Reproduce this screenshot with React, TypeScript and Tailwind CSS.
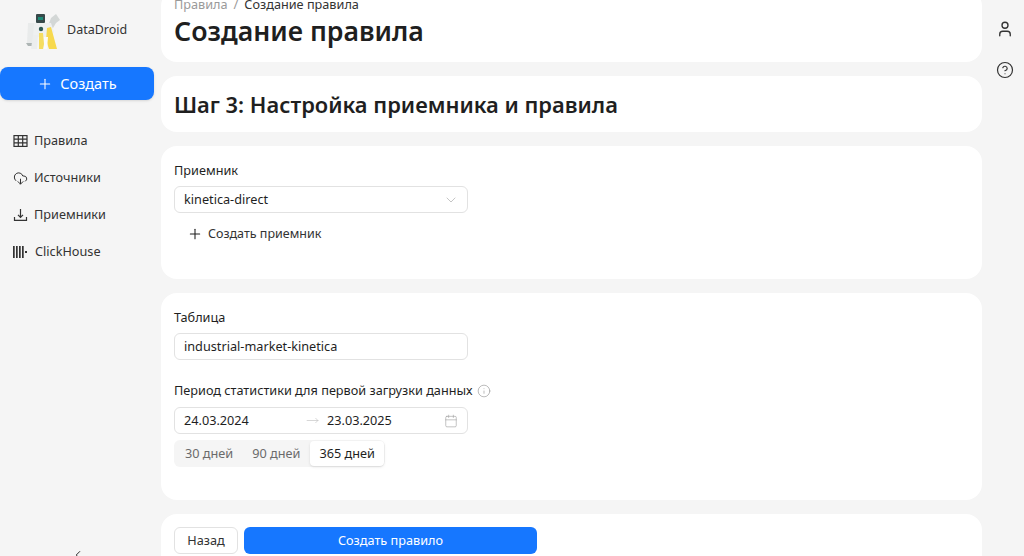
import { Plus, ChevronDown, ChevronLeft, CloudDownload, User, CircleHelp, Info, Calendar, MoveRight } from 'lucide-react';

function TableIcon() {
  return (
    <svg width="15" height="14" viewBox="0 0 15 14" fill="none" stroke="currentColor" strokeWidth="1.2">
      <rect x="1" y="1.6" width="13" height="10.8" />
      <path d="M1 5.2h13M1 8.8h13M5.3 1.6v10.8M9.7 1.6v10.8" />
    </svg>
  );
}

function TrayDownloadIcon() {
  return (
    <svg width="15" height="14" viewBox="0 0 15 14" fill="none" stroke="currentColor" strokeWidth="1.2">
      <path d="M7.5 1v8M5 6.8l2.5 2.6L10 6.8" />
      <path d="M1.5 9v3.4h12V9" />
    </svg>
  );
}

function Logo() {
  return (
    <svg width="34" height="36" viewBox="0 0 34 36">
      <path d="M25 5l5-4 4 6-4 3-3 5-5-2z" fill="#d3d7d6" />
      <rect x="10" y="1" width="9" height="9" rx="1" fill="#37494a" />
      <rect x="12" y="4" width="5" height="3" fill="#1e8c78" />
      <path d="M8 10h17l3 9-3 5H7z" fill="#eef0f0" />
      <circle cx="15" cy="16" r="2.2" fill="#2f5a55" />
      <path d="M2 10h6l-1 20H1z" fill="#e9ebeb" />
      <path d="M0 30h6v3H2z" fill="#aeb5b4" />
      <path d="M7 22h5l-1 14H5z" fill="#eceeee" />
      <path d="M13 20h4l1 11-1 5h-4z" fill="#f5dd62" />
      <path d="M21 15l4-1 6 22h-8l-3-9z" fill="#f7d94e" />
      <path d="M18 24h4l-1 12h-3z" fill="#fbfbfb" />
    </svg>
  );
}

function ClickHouseIcon() {
  return (
    <svg width="15" height="14" viewBox="0 0 15 14" fill="currentColor">
      <rect x="0" y="1" width="1.7" height="12" />
      <rect x="3" y="1" width="1.7" height="12" />
      <rect x="6" y="1" width="1.7" height="12" />
      <rect x="9" y="1" width="1.7" height="12" />
      <rect x="12" y="6" width="2" height="2" />
    </svg>
  );
}

const NAV = [
  { label: 'Правила', icon: <TableIcon /> },
  { label: 'Источники', icon: <CloudDownload size={15} strokeWidth={1.6} /> },
  { label: 'Приемники', icon: <TrayDownloadIcon /> },
];

function Card({ className, children }: { className: string; children: React.ReactNode }) {
  return <section className={`rounded-2xl bg-white px-[13px] ${className}`}>{children}</section>;
}

export default function App() {
  return (
    <div
      className="flex h-[556px] w-[1024px] overflow-hidden bg-[#f5f5f5] text-[12.7px] text-[#1f1f1f]"
      style={{ fontFamily: '"Noto Sans", sans-serif' }}
    >
      <aside className="flex w-[161px] shrink-0 flex-col">
        <div className="flex h-[67px] items-center pb-[6px] pl-[26px]">
          <Logo />
          <span className="ml-[7px] text-[12.5px] text-[#333]">DataDroid</span>
        </div>
        <button className="flex h-[33px] w-[154px] items-center justify-center gap-[7px] rounded-lg bg-[#1677ff] text-[14.5px] text-white shadow-sm">
          <Plus size={16} strokeWidth={1.6} />
          Создать
        </button>
        <nav className="mt-[30px] flex flex-col gap-[15px] pl-[13px] text-[#333]">
          {NAV.map(item => (
            <div key={item.label} className="flex h-[22px] items-center gap-[6px]">
              {item.icon}
              <span>{item.label}</span>
            </div>
          ))}
          <div className="flex h-[22px] items-center gap-[7px]">
            <ClickHouseIcon />
            <span>ClickHouse</span>
          </div>
        </nav>
        <div className="mt-auto flex h-[8px] justify-center overflow-hidden pr-[6px]">
          <ChevronLeft size={14} strokeWidth={1.6} className="shrink-0" />
        </div>
      </aside>

      <main className="flex w-[821px] shrink-0 flex-col gap-[14px]">
        <Card className="-mt-[10px] h-[72px] shrink-0 pt-[4px]">
          <div className="flex h-[20px] items-end leading-[20px]">
            <span className="text-[#9a9a9a]">Правила</span>
            <span className="mx-[6px] text-[#9a9a9a]">/</span>
            <span className="text-[#333]">Создание правила</span>
          </div>
          <h1 className="text-[26.7px] font-semibold leading-[34px] text-[#1f1f1f]">Создание правила</h1>
        </Card>

        <Card className="flex h-[56px] shrink-0 items-center pt-[3px]">
          <h2 className="text-[21.9px] font-semibold text-[#1f1f1f]">Шаг 3: Настройка приемника и правила</h2>
        </Card>

        <Card className="h-[133px] shrink-0 pt-[14px]">
          <label className="block leading-[20px]">Приемник</label>
          <div className="mt-[6px] flex h-[27px] w-[294px] items-center justify-between rounded-md border border-[#e2e2e2] pl-[9px] pr-[8px]">
            <span>kinetica-direct</span>
            <ChevronDown size={16} strokeWidth={1} className="text-[#a8a8a8]" />
          </div>
          <div className="mt-[10px] flex h-[22px] items-center gap-[5px] pl-[13px] text-[12.5px] text-[#333]">
            <Plus size={16} strokeWidth={1.6} className="text-[#1f1f1f]" />
            Создать приемник
          </div>
        </Card>

        <Card className="h-[207px] shrink-0 pt-[14px]">
          <label className="block leading-[20px]">Таблица</label>
          <div className="mt-[6px] flex h-[27px] w-[294px] items-center rounded-md border border-[#e2e2e2] px-[9px]">
            industrial-market-kinetica
          </div>
          <div className="mt-[21px] flex h-[20px] items-center gap-[4px]">
            <span>Период статистики для первой загрузки данных</span>
            <Info size={14} strokeWidth={1} className="text-[#8c8c8c]" />
          </div>
          <div className="mt-[6px] flex h-[27px] w-[294px] items-center rounded-md border border-[#e2e2e2] pl-[9px] pr-[9px]">
            <span className="w-[122px]">24.03.2024</span>
            <MoveRight size={13} strokeWidth={1} className="text-[#b5b5b5]" />
            <span className="ml-[8px]">23.03.2025</span>
            <Calendar size={14} strokeWidth={1} className="ml-auto text-[#9a9a9a]" />
          </div>
          <div className="mt-[6px] flex h-[27px] w-fit items-center rounded-md bg-[#f5f5f5] p-[1px] text-[#6b6b6b]">
            <span className="px-[10px]">30 дней</span>
            <span className="px-[9px]">90 дней</span>
            <span className="ml-[1px] flex h-[25px] items-center rounded bg-white px-[9px] text-[#1f1f1f] shadow-sm">365 дней</span>
          </div>
        </Card>

        <Card className="h-[60px] shrink-0 pt-[13px]">
          <div className="flex gap-[6px]">
            <button className="h-[27px] w-[64px] rounded-md border border-[#e2e2e2] text-[#333]">Назад</button>
            <button className="h-[27px] w-[293px] rounded-md bg-[#1677ff] text-white">Создать правило</button>
          </div>
        </Card>
      </main>

      <aside className="flex flex-1 flex-col items-center gap-[23px] pl-[3px] pt-[20px] text-[#333]">
        <User size={18} strokeWidth={1.8} />
        <CircleHelp size={18} strokeWidth={1.6} />
      </aside>
    </div>
  );
}
